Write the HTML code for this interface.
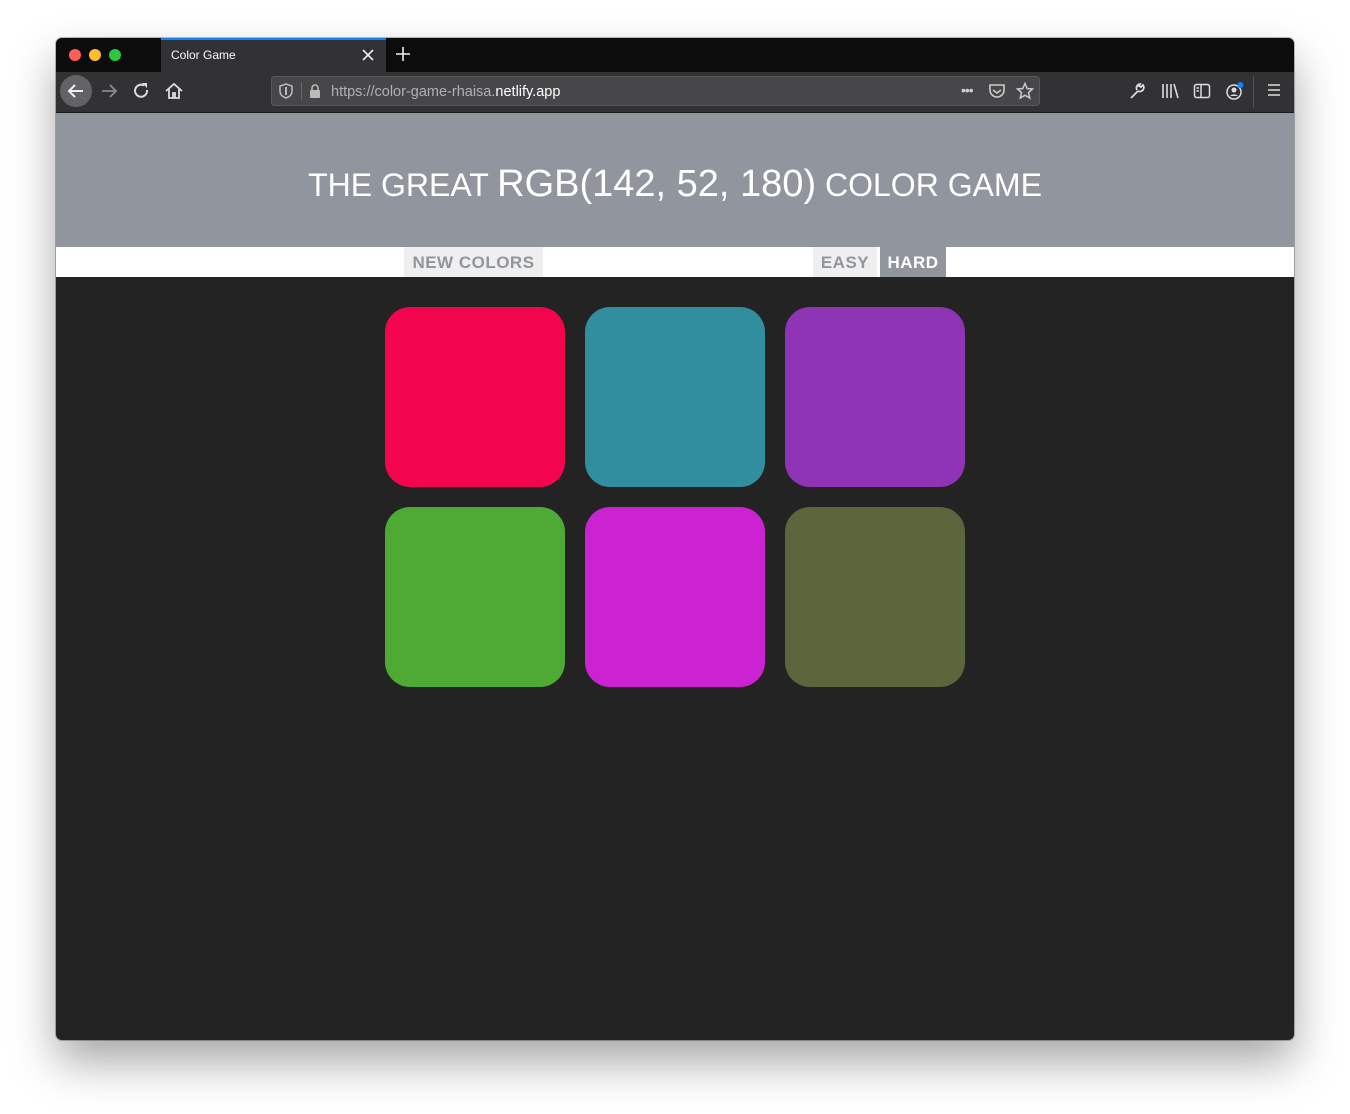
<!DOCTYPE html>
<html><head><style>
*{margin:0;padding:0;box-sizing:border-box}
body{width:1350px;height:1114px;background:#fff;position:relative;overflow:hidden;font-family:"Liberation Sans",sans-serif}
#win{position:absolute;left:56px;top:38px;width:1238px;height:1002px;border-radius:6px;overflow:hidden;background:#232323;box-shadow:0 22px 45px rgba(0,0,0,.35),0 0 0 1px rgba(0,0,0,.25)}
#tabs{position:absolute;left:0;top:0;width:100%;height:34px;background:#0c0c0d}
.dot{position:absolute;top:11px;width:12px;height:12px;border-radius:50%}
#tab{position:absolute;left:105px;top:0;width:225px;height:34px;background:#323234;border-top:2px solid #0a84ff;color:#f9f9fa;font-size:12px}
#tb{position:absolute;left:0;top:34px;width:100%;height:40px;background:#323234}
#url{position:absolute;left:215px;top:4px;width:769px;height:30px;background:#474749;border-radius:4px;border:1px solid #5a5a5c}
#hdr{position:absolute;left:0;top:74px;width:100%;height:135px;background:#91959e;border-top:1px solid #1a1a1a;color:#fff;text-align:center}
#hdr h1{font-weight:normal;font-size:32px;line-height:1;position:absolute;top:52px;left:0;width:100%;letter-spacing:0}
#bar{position:absolute;left:0;top:209px;width:100%;height:30px;background:#fff}
.btn{position:absolute;top:0;height:30px;line-height:32px;font-size:17px;font-weight:bold;color:#91959e;background:#efefef;text-align:center;letter-spacing:0.5px}
.sq{position:absolute;width:180px;height:180px;border-radius:25px}
svg{position:absolute}
</style></head><body>
<div id="win">
 <div id="tabs">
  <div class="dot" style="left:13px;background:#fe5f57"></div>
  <div class="dot" style="left:33px;background:#febc2e"></div>
  <div class="dot" style="left:53px;background:#28c840"></div>
  <div id="tab"><span style="position:absolute;left:10px;top:8px">Color Game</span>
   <svg style="left:201px;top:9px" width="12" height="12"><path d="M1 1L11 11M11 1L1 11" stroke="#eee" stroke-width="1.6"/></svg></div>
  <svg style="left:339px;top:8px" width="16" height="16"><path d="M8 1V15M1 8H15" stroke="#eee" stroke-width="1.6"/></svg>
 </div>
 <div id="tb">
  <div style="position:absolute;left:4px;top:3px;width:32px;height:32px;border-radius:50%;background:#636365"></div>
  <svg style="left:10px;top:9px" width="20" height="20"><path d="M17 10H3M9 4L3 10L9 16" stroke="#f0f0f0" stroke-width="2" fill="none"/></svg>
  <svg style="left:43px;top:9px" width="20" height="20"><path d="M3 10H17M11 4L17 10L11 16" stroke="#8a8a8c" stroke-width="1.8" fill="none"/></svg>
  <svg style="left:76px;top:9px" width="20" height="20"><path d="M15 9A6 6 0 1 1 12 4.5" stroke="#ddd" stroke-width="2" fill="none"/><path d="M10 2H15V7Z" fill="#ddd"/></svg>
  <svg style="left:108px;top:9px" width="20" height="20"><path d="M2 10L10 3L18 10M5 8V17H15V8M9 17V12H11V17" stroke="#ddd" stroke-width="1.8" fill="none"/></svg>
  <div id="url">
   <svg style="left:7px;top:6px" width="14" height="16"><path d="M7 1L13 3V8C13 12 10 14 7 15C4 14 1 12 1 8V3Z" stroke="#bbb" stroke-width="1.5" fill="none"/><path d="M7 4V12" stroke="#bbb" stroke-width="2"/></svg>
   <div style="position:absolute;left:29px;top:5px;width:1px;height:18px;background:#666"></div>
   <svg style="left:37px;top:6px" width="12" height="15"><path d="M3 7V5A3 3 0 0 1 9 5V7" stroke="#bbb" stroke-width="1.6" fill="none"/><rect x="1" y="7" width="10" height="8" rx="1" fill="#bbb"/></svg>
   <span style="position:absolute;left:59px;top:7px;font-size:14.5px;color:#b1b1b3">https://color-game-rhaisa.<span style="color:#fff">netlify.app</span></span>
   <span style="position:absolute;left:689px;top:5px;font-size:14px;color:#ccc;letter-spacing:-1px">•••</span>
   <svg style="left:716px;top:6px" width="18" height="16"><path d="M2 2H16V7A7 7 0 0 1 2 7Z" stroke="#ccc" stroke-width="1.6" fill="none"/><path d="M5 7L9 10L13 7" stroke="#ccc" stroke-width="1.6" fill="none"/></svg>
   <svg style="left:744px;top:5px" width="18" height="18"><path d="M9 1.5L11.2 6.5L16.5 7L12.5 10.5L13.7 16L9 13.2L4.3 16L5.5 10.5L1.5 7L6.8 6.5Z" stroke="#ccc" stroke-width="1.5" fill="none"/></svg>
  </div>
  <svg style="left:1072px;top:10px" width="18" height="18"><path d="M3 16L10 9M10 9A4 4 0 0 0 15 3L13 5L11 4L12 2A4 4 0 0 0 9 8" stroke="#ddd" stroke-width="1.8" fill="none"/></svg>
  <svg style="left:1104px;top:10px" width="20" height="18"><path d="M3 2V16M7 2V16M11 2V16M14 2L18 16" stroke="#ddd" stroke-width="1.6" fill="none"/></svg>
  <svg style="left:1137px;top:10px" width="18" height="18"><rect x="1.5" y="2.5" width="15" height="13" rx="2" stroke="#ddd" stroke-width="1.5" fill="none"/><path d="M8 3V15M3.5 6H6M3.5 9H6" stroke="#ddd" stroke-width="1.5"/></svg>
  <svg style="left:1169px;top:9px" width="20" height="20"><circle cx="9" cy="11" r="7" stroke="#ddd" stroke-width="1.5" fill="none"/><circle cx="9" cy="9" r="2.5" fill="#ddd"/><path d="M5 15A5 4 0 0 1 13 15" fill="#ddd"/><circle cx="15.5" cy="4" r="3" fill="#0a84ff"/></svg>
  <div style="position:absolute;left:1197px;top:4px;width:1px;height:32px;background:#555"></div>
  <svg style="left:1211px;top:11px" width="14" height="14"><path d="M1 2H13M1 7H13M1 12H13" stroke="#ddd" stroke-width="1.6"/></svg>
 </div>
 <div id="hdr"><h1>THE GREAT <span style="font-size:38px">RGB(142, 52, 180)</span> COLOR GAME</h1></div>
 <div id="bar">
  <div class="btn" style="left:348px;width:139px">NEW COLORS</div>
  <div class="btn" style="left:757px;width:64px">EASY</div>
  <div class="btn" style="left:824px;width:66px;background:#91959e;color:#fff">HARD</div>
 </div>
 <div class="sq" style="left:329px;top:269px;background:#f3044f"></div>
 <div class="sq" style="left:529px;top:269px;background:#318e9f"></div>
 <div class="sq" style="left:729px;top:269px;background:#8e34b4"></div>
 <div class="sq" style="left:329px;top:469px;background:#4fa935"></div>
 <div class="sq" style="left:529px;top:469px;background:#cb22d2"></div>
 <div class="sq" style="left:729px;top:469px;background:#5c663c"></div>
</div>
</body></html>
